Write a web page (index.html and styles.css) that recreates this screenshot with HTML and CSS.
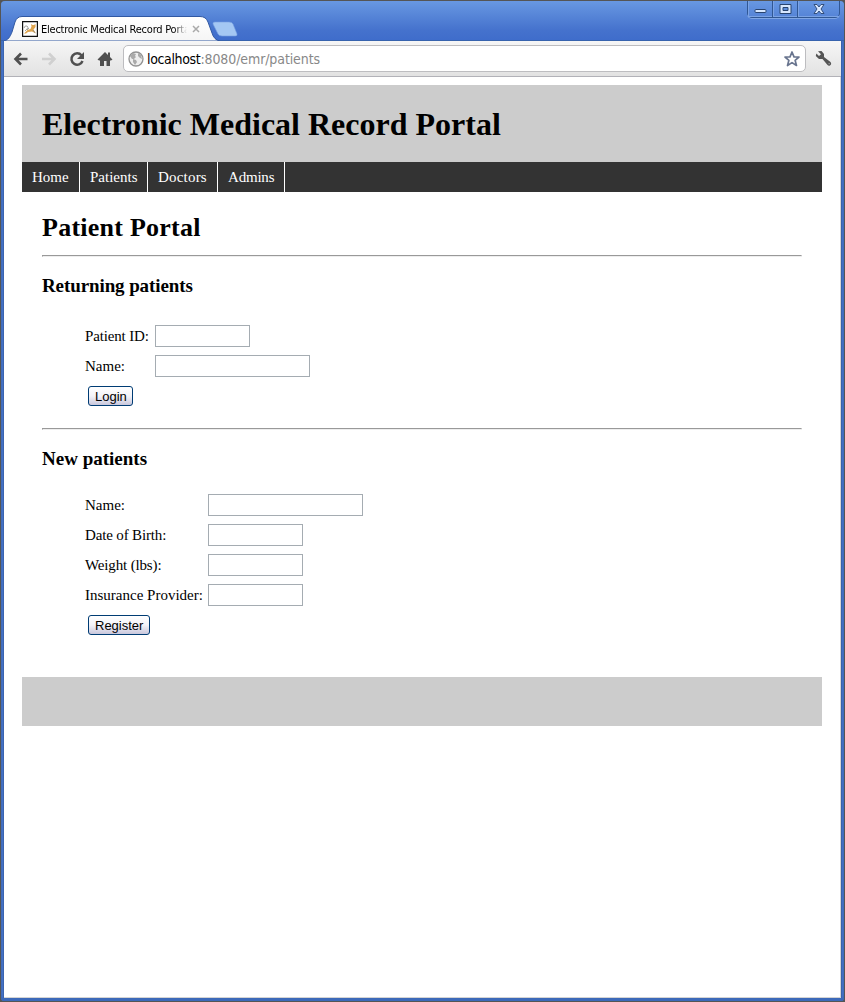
FILE: index.html
```
<!DOCTYPE html>
<html lang="en">
<head>
<meta charset="utf-8">
<title>Electronic Medical Record Portal</title>
<link rel="stylesheet" href="styles.css">
</head>
<body>
<div class="window">
  <div class="tabstrip">
    <svg class="tab-shape" width="240" height="41" viewBox="0 0 240 41">
      <defs><linearGradient id="tab" x1="0" y1="0" x2="0" y2="1"><stop offset="0" stop-color="#fff"/><stop offset="1" stop-color="#f5f5f5"/></linearGradient></defs>
      <path d="M4 41C8 40 10 37 12 32L15 22Q17 16.500 22 16.500H200Q206 16.500 208 22L212 33Q214 40 220 41Z" fill="url(#tab)" stroke="#3058a2" stroke-width="1"/>
      <path d="M215 22H229Q232 22 233 24L237 34Q237.500 36 235 36H222Q219 36 218 34L213 24Q212.500 22 215 22Z" fill="#a4c7f3" stroke="#75a0e1" stroke-width=".6"/>
    </svg>
    <div class="tab">
      <svg class="favicon" width="16" height="16" viewBox="0 0 16 16"><path d="M.6.6h14.800v14.800H.6z" fill="#fff" stroke="#111" stroke-width="1.200"/><path d="M2 12.500l3.500-3.500 3-1 1-2.500L9 3l1.500 1h1.500L13.500 3v3l-2 2.500 2.500 4-4-2-4 .5-2 1.500z" fill="#dfa44d"/><path d="M2 7q1-3 3-2t0 3L3 10M7 7L5 9M11 9l2 3" fill="none" stroke="#8d8d88" stroke-width=".8"/></svg>
      <span class="tab-title">Electronic Medical Record Portal</span>
      <svg class="tab-close" width="8" height="8" viewBox="0 0 8 8"><path d="M1 1l6 6M7 1L1 7" stroke="#aaa" stroke-width="1.500"/></svg>
    </div>
    <div class="controls">
      <span class="control"><svg width="13" height="17" viewBox="0 0 13 17"><rect x="1" y="8.500" width="11" height="3" rx="1" fill="#d7e7ff" stroke="#29446f"/></svg></span>
      <span class="control"><svg width="13" height="17" viewBox="0 0 13 17"><path d="M1 3.500h11v9H1zM4 6.500v3h5v-3z" fill="#d7e7ff" fill-rule="evenodd" stroke="#29446f"/></svg></span>
      <span class="control control-close"><svg width="12" height="17" viewBox="0 0 12 17"><path d="M1 3.500h3l2 2.500 2-2.500h3L8 8l3 4.500H8L6 10l-2 2.500H1L4 8z" fill="#d7e7ff" stroke="#29446f" stroke-width=".9"/></svg></span>
    </div>
  </div>
  <div class="toolbar">
    <svg class="tool back" width="16" height="16" viewBox="0 0 16 16"><path d="M14.500 8H3M8 2.500L2.500 8 8 13.500" fill="none" stroke="#505050" stroke-width="2.600"/></svg>
    <svg class="tool forward" width="16" height="16" viewBox="0 0 16 16"><path d="M1 8h12M8 2.500L13.500 8 8 13.500" fill="none" stroke="#d0d0d0" stroke-width="2.600"/></svg>
    <svg class="tool reload" width="16" height="16" viewBox="0 0 16 16"><path d="M12.500 4.300A5.700 5.700 0 1 0 13.500 10" fill="none" stroke="#505050" stroke-width="2.500"/><path d="M15 1v7H8z" fill="#505050"/></svg>
    <svg class="tool home" width="16" height="16" viewBox="0 0 16 16"><path d="M8 1L.5 8.500 2 9.500h1V15h4v-5h2.500v5H13V9.500h1l1.500-1L13 6V1.500h-2V4z" fill="#505050"/></svg>
    <div class="omnibox">
      <svg class="globe" width="16" height="16" viewBox="0 0 16 16"><circle cx="8" cy="8" r="7" fill="#eee" stroke="#929292" stroke-width="1.300"/><path d="M2 5l3-3 3 1-1 2 1 1-2 2H4zM5 8l3 1 1 2-2 3-2-3zM10 2l3 2 1 4-2-1-2-2z" fill="#aaa"/></svg>
      <span class="url">localhost<span class="path">:8080/emr/patients</span></span>
      <svg class="star" width="18" height="18" viewBox="0 0 18 18"><path d="M9 2l2 4.800 5 .2-3.900 3.300 1.400 5.200L9 12.600l-4.500 2.900 1.400-5.200L2 7l5-.2z" fill="#fff" stroke="#69758f" stroke-width="1.700" stroke-linejoin="round"/></svg>
    </div>
    <svg class="wrench" width="17" height="17" viewBox="0 0 17 17"><path d="M3 1.300L6.500 1 9 4 9 7l6.500 5q1.500 2-.5 3.500-1.500.7-2.700-.7L7.500 9 4 9 .8 6 1.300 3.500 4 6l2-1.700z" fill="#555"/><path d="M13.700 13.700h.8" stroke="#ddd"/></svg>
  </div>
  <main class="page">
    <header class="banner"><h1>Electronic Medical Record Portal</h1></header>
    <nav class="nav"><a class="n-home">Home</a><a class="n-patients">Patients</a><a class="n-doctors">Doctors</a><a class="n-admins">Admins</a></nav>
    <section class="content">
      <h2>Patient Portal</h2>
      <div class="rule"></div>
      <h3 class="returning">Returning patients</h3>
      <form class="form login">
        <label for="pid" class="l-pid">Patient ID:</label><input id="pid" class="short">
        <label for="pname" class="l-name">Name:</label><input id="pname" class="long">
        <button type="button">Login</button>
      </form>
      <div class="rule"></div>
      <h3 class="new">New patients</h3>
      <form class="form register">
        <label for="name" class="l-name">Name:</label><input id="name" class="long">
        <label for="dob" class="l-dob">Date of Birth:</label><input id="dob" class="short">
        <label for="weight" class="l-weight">Weight (lbs):</label><input id="weight" class="short">
        <label for="insurance" class="l-ins">Insurance Provider:</label><input id="insurance" class="short">
        <button type="button">Register</button>
      </form>
    </section>
    <footer class="footer"></footer>
  </main>
</div>
</body>
</html>
```
FILE: styles.css
```
* { box-sizing: border-box; }
body { margin: 0; width: 845px; height: 1002px; overflow: hidden; background: #555; font: 16px "Liberation Serif", serif; color: #000; }
.window { display: flex; flex-direction: column; width: 843px; height: 1000px; margin: 1px; padding: 0 3px 3px; background: linear-gradient(90deg, #3d69b8, #4774c8 2px, #2c5295 3px, #2c5295 840px, #4472c6 841px, #3d69b8); border-radius: 4px 4px 3px 3px; box-shadow: inset 0 -3px #3c69b9; }
.tabstrip { position: relative; display: flex; flex: none; height: 40px; margin: 0 -3px; padding-left: 21px; background: linear-gradient(#6898e2, #4572cd 75%, #3f6dcb); border-radius: 4px 4px 0 0; border-bottom: 1px solid #3763ae; }
.tab-shape { position: absolute; left: -1px; top: -1px; }
.tab { position: relative; display: flex; align-items: center; width: 180px; height: 16px; margin-top: 20px; }
.tab-title { width: 146px; margin-left: 3px; overflow: hidden; white-space: nowrap; font: 11px "DejaVu Sans Condensed", sans-serif; letter-spacing: -.23px; -webkit-mask-image: linear-gradient(90deg, #000 91%, transparent); mask-image: linear-gradient(90deg, #000 91%, transparent); }
.favicon, .tab-close { flex: none; }
.tab-close { margin-left: 5px; }
.controls { display: flex; height: 17px; margin-left: auto; margin-right: 4px; border: 1px solid #305794; border-top: 0; border-radius: 0 0 5px 5px; box-shadow: 0 1px #80a6e5; }
.control { display: flex; justify-content: center; width: 25px; border-right: 1px solid #305794; box-shadow: inset 1px -1px #7ba3e4; }
.control-close { width: 41px; border: 0; }
.toolbar { display: flex; align-items: center; flex: none; height: 36px; padding-left: 9px; background: linear-gradient(#f6f6f6, #e2e2e2); border-bottom: 1px solid #b2b2b8; }
.tool { flex: none; }
.forward, .reload, .home { margin-left: 12px; }
.omnibox { display: flex; align-items: center; width: 683px; height: 27px; margin-left: 10px; padding: 0 4px; background: #fff; border: 1px solid #bdbdc0; border-radius: 5px; }
.url { margin-left: 3px; font: 14px "DejaVu Sans Condensed", sans-serif; letter-spacing: -.35px; white-space: nowrap; }
.path { color: #888; letter-spacing: -.1px; }
.star { margin-left: auto; }
.wrench { margin-left: 9px; }
.page { flex: 1; padding: 8px 18px 0; background: #fff; border: solid #d4d4d4; border-width: 0 1px 1px 0; }
.banner { display: flex; align-items: center; width: 800px; height: 77px; padding: 1px 0 0 20px; background: #ccc; }
h1, h2, h3 { margin: 0; white-space: nowrap; }
h1 { font-size: 32px; }
.nav { display: flex; width: 800px; height: 30px; background: #333; color: #fff; font-size: 15px; }
.nav a { padding-left: 10px; line-height: 30px; border-right: 1px solid #fff; }
.n-home { width: 58px; }
.n-patients { width: 68px; }
.n-doctors { width: 70px; letter-spacing: .2px; }
.n-admins { width: 67px; letter-spacing: -.2px; }
.content { display: flex; flex-direction: column; width: 800px; height: 485px; padding: 20px 20px 0; }
h2 { height: 43px; font-size: 26px; line-height: 32px; letter-spacing: .25px; }
.rule { flex: none; height: 2px; border-top: 1px solid #999; border-left: 1px solid #999; border-bottom: 1px solid #eee; border-right: 1px solid #eee; }
h3 { font-size: 19px; line-height: 22px; }
.returning { height: 64px; padding-top: 18px; letter-spacing: -.1px; }
.new { height: 60px; padding-top: 18px; }
.form { display: grid; grid-auto-rows: 30px; align-items: center; justify-items: start; margin-left: 43px; }
.login { grid-template-columns: 70px 160px; height: 107px; }
.register { grid-template-columns: 123px 160px; }
label { white-space: nowrap; font-size: 15px; }
.l-pid, .l-dob, .l-weight { letter-spacing: -.15px; }
input { height: 22px; padding: 1px; border: 1px solid #a5acb2; background: #fff; }
.short { width: 95px; }
.long { width: 155px; }
button { grid-column: 1; height: 20px; margin-left: 3px; padding: 1px 6px; background: linear-gradient(#fff, #f3f3f8 50%, #c9c7dc); border: 1px solid #003c74; border-radius: 3px; font: 13px "Liberation Sans", sans-serif; }
.login button { width: 45px; }
.register button { width: 62px; }
.footer { width: 800px; height: 49px; background: #ccc; }
```
